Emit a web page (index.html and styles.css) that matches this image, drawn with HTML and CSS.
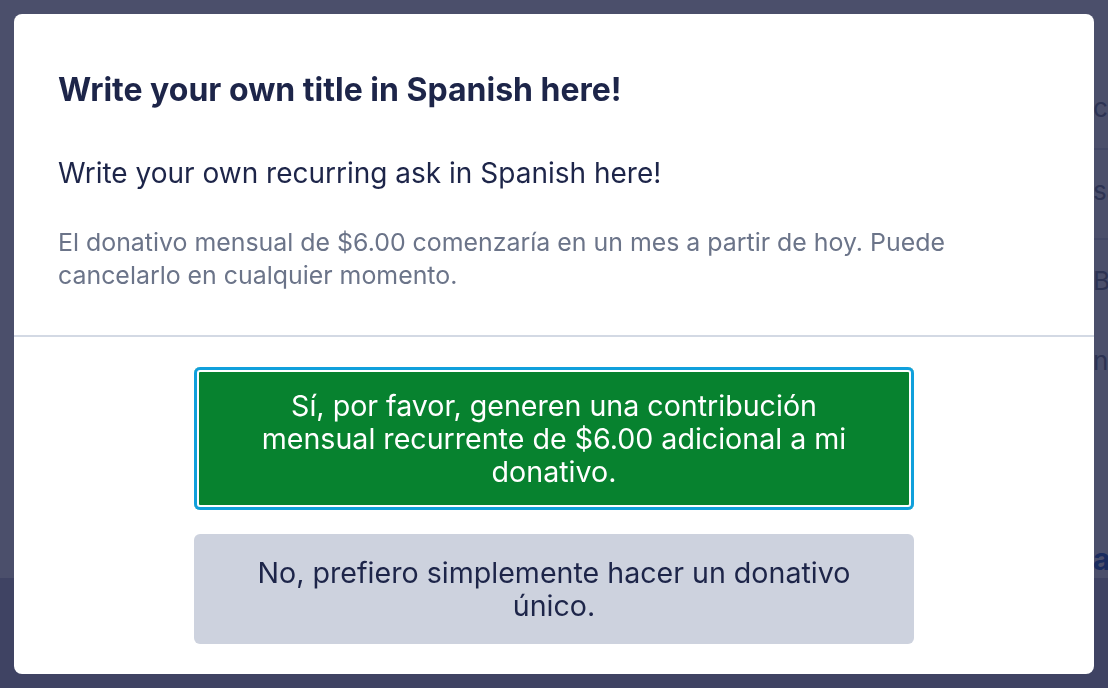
FILE: index.html
```html
<!DOCTYPE html>
<html lang="es">
<head>
    <meta charset="UTF-8">
    <meta name="viewport" content="width=device-width, initial-scale=1.0">
    <title>Donativo</title>
    <link rel="stylesheet" href="styles.css">
</head>
<body>
    <div class="page">
        <div class="page-main">
            <div class="page-row row-one">c</div>
            <div class="page-row row-two">sa</div>
            <div class="page-row row-three">B</div>
            <div class="page-row row-four">ne</div>
            <div class="page-total">al</div>
        </div>
        <div class="page-footer"></div>
    </div>

    <div class="overlay">
        <div class="modal">
            <div class="modal-body">
                <h2 class="modal-title">Write your own title in Spanish here!</h2>
                <p class="modal-ask">Write your own recurring ask in Spanish here!</p>
                <p class="modal-note">El donativo mensual de $6.00 comenzaría en un mes a partir de hoy. Puede cancelarlo en cualquier momento.</p>
            </div>
            <div class="modal-actions">
                <button class="btn btn-yes">Sí, por favor, generen una contribución mensual recurrente de $6.00 adicional a mi donativo.</button>
                <button class="btn btn-no">No, prefiero simplemente hacer un donativo único.</button>
            </div>
        </div>
    </div>
</body>
</html>
```

FILE: styles.css
```css
* {
    margin: 0;
    padding: 0;
    box-sizing: border-box;
}

html, body {
    height: 100%;
    width: 100%;
    overflow: hidden;
}

body {
    font-family: Inter, "Noto Sans", "Liberation Sans", sans-serif;
    background-color: #ffffff;
}

/* page behind the dialog */
.page {
    display: flex;
    flex-direction: column;
    height: 100%;
}

.page-main {
    flex: 1;
    padding-left: 1093px;
}

.page-row {
    font-size: 26px;
    line-height: 30px;
    color: #6b7489;
    white-space: nowrap;
}

.row-one {
    height: 150px;
    padding-top: 93px;
    border-bottom: 2px solid #d8dce6;
}

.row-two {
    height: 90px;
    padding-top: 26px;
    border-bottom: 2px solid #d8dce6;
}

.row-three {
    height: 90px;
    padding-top: 26px;
}

.row-four {
    height: 90px;
    padding-top: 16px;
}

.page-total {
    padding-top: 122px;
    font-size: 30px;
    line-height: 34px;
    font-weight: 700;
    color: #0b4fc4;
    white-space: nowrap;
}

.page-footer {
    height: 110px;
    background-color: #c0c4d8;
}

/* dialog */
.overlay {
    position: fixed;
    inset: 0;
    background-color: rgba(30, 35, 70, 0.8);
    padding: 14px;
    display: flex;
    align-items: center;
}

.modal {
    width: 100%;
    background: white;
    border-radius: 8px;
    overflow: hidden;
}

.modal-body {
    padding: 56px 44px 43px;
    border-bottom: 2px solid #d3d9e4;
}

.modal-title {
    font-size: 32px;
    line-height: 40px;
    font-weight: 700;
    color: #1d2549;
    margin-bottom: 46px;
}

.modal-ask {
    font-size: 28px;
    line-height: 34px;
    color: #1d2549;
    margin-bottom: 36px;
}

.modal-note {
    font-size: 24.9px;
    line-height: 33px;
    color: #6b7489;
}

.modal-actions {
    display: flex;
    flex-direction: column;
    align-items: center;
    gap: 24px;
    padding: 30px 0;
}

.btn {
    width: 720px;
    border: none;
    border-radius: 6px;
    padding: 22px 48px;
    font-family: inherit;
    font-size: 28.6px;
    line-height: 33px;
    cursor: pointer;
}

.btn-yes {
    background-color: #07822f;
    color: white;
    box-shadow: inset 0 0 0 3px #10a0dc, inset 0 0 0 5px #ffffff;
}

.btn-no {
    background-color: #cdd2de;
    color: #1d2549;
}
```
